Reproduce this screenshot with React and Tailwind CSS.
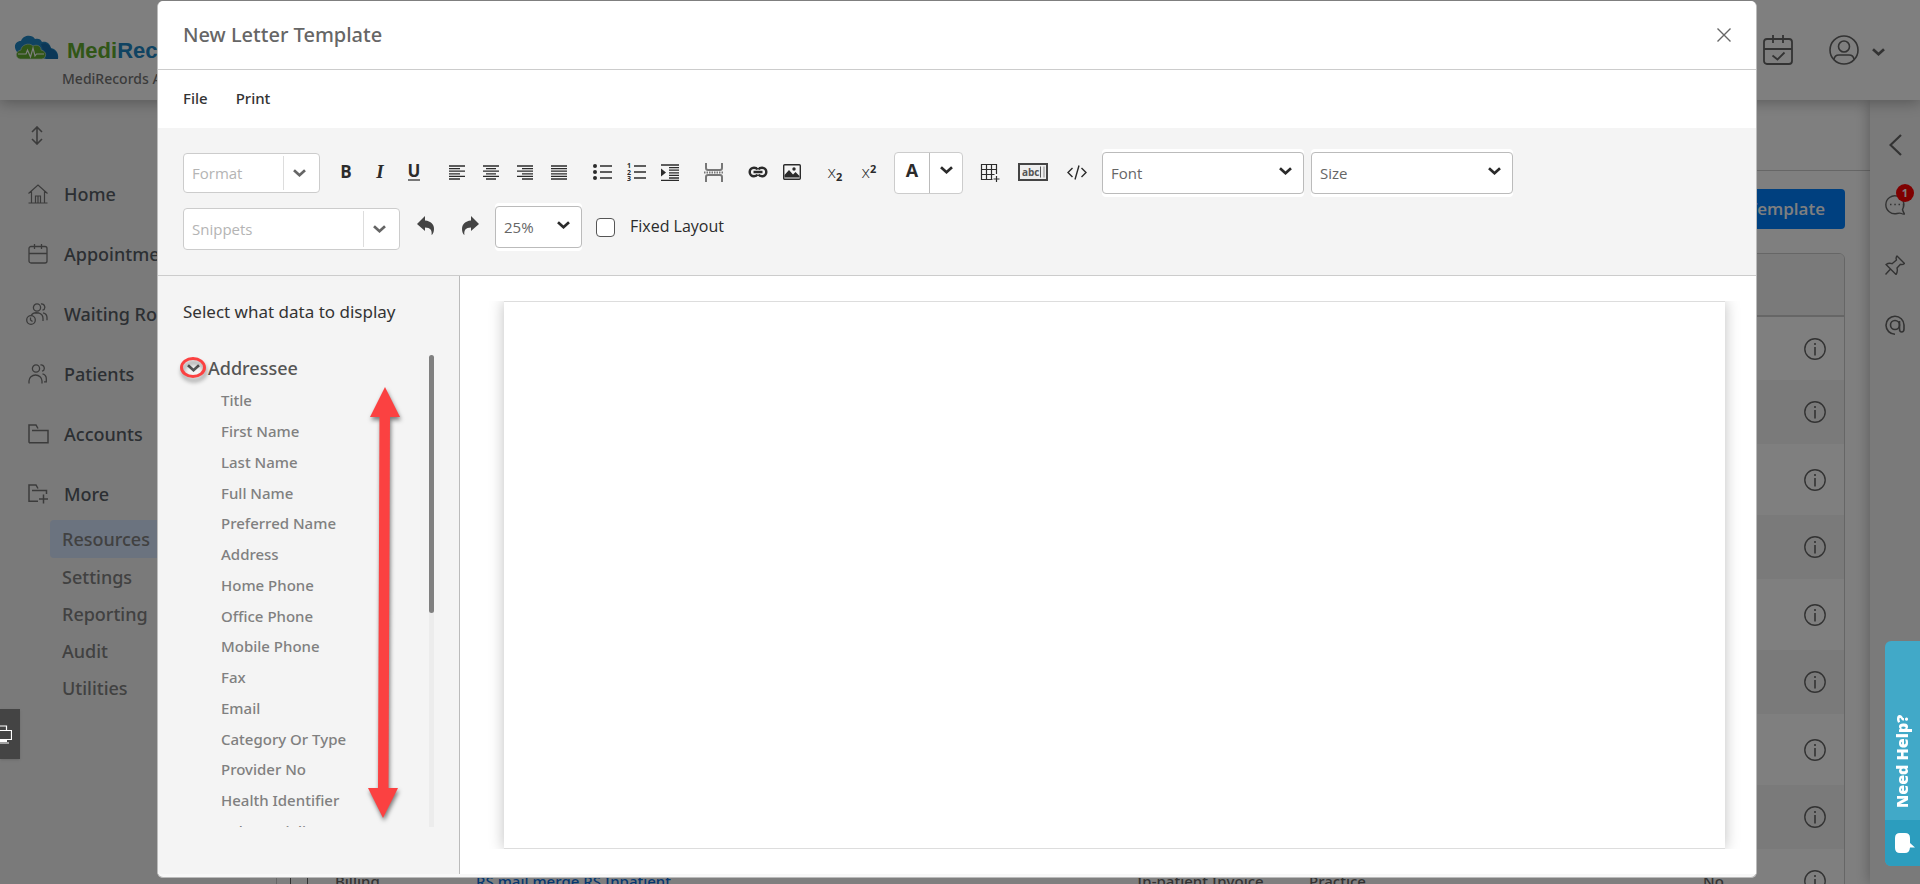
import { useState } from "react";

const navItems = [
    { label: "Home", icon: HomeIcon },
    { label: "Appointments", icon: CalendarIcon },
    { label: "Waiting Room", icon: WaitingIcon },
    { label: "Patients", icon: PatientsIcon },
    { label: "Accounts", icon: FolderIcon },
    { label: "More", icon: FolderPlusIcon },
];

const subItems = ["Settings", "Reporting", "Audit", "Utilities"];

const fields = [
    "Title",
    "First Name",
    "Last Name",
    "Full Name",
    "Preferred Name",
    "Address",
    "Home Phone",
    "Office Phone",
    "Mobile Phone",
    "Fax",
    "Email",
    "Category Or Type",
    "Provider No",
    "Health Identifier",
    "Sub Speciality",
];

const rows = [
    { tall: false },
    { tall: false },
    { tall: true },
    { tall: false },
    { tall: true },
    { tall: false },
    { tall: true },
    { tall: false },
    { tall: false, type: "Billing", name: "RS mail merge RS Inpatient", category: "In-patient Invoice", owner: "Practice", shared: "No" },
];

function HomeIcon() {
    return (
        <svg width="20" height="20" viewBox="0 0 20 20" fill="none" stroke="currentColor" strokeWidth="1.2">
            <path d="M.5 9.5 10 1l9.5 8.5M3.5 7.5v11M16.5 7.5v11M.5 19h19M7.5 19v-7h5v7M10 12v7" />
        </svg>
    );
}

function CalendarIcon() {
    return (
        <svg width="20" height="20" viewBox="0 0 20 20" fill="none" stroke="currentColor" strokeWidth="1.3">
            <rect x="1" y="2.5" width="18" height="16.5" rx="2" />
            <path d="M1 9.5h18M6.5 0v5M13.5 0v5" />
        </svg>
    );
}

function PatientsIcon() {
    return (
        <svg width="20" height="20" viewBox="0 0 20 20" fill="none" stroke="currentColor" strokeWidth="1.3">
            <circle cx="8" cy="4.5" r="3.6" />
            <path d="M1 19.5v-2.5a6.5 6 0 0 1 13 0v2.5M12.5 1a3 3.2 0 0 1 1.5 6.2M14.5 9.8a5 5 0 0 1 3.8 5v3H16" />
        </svg>
    );
}

function WaitingIcon() {
    return (
        <svg className="-ml-0.5" width="22" height="22" viewBox="0 0 22 22" fill="none" stroke="currentColor" strokeWidth="1.3">
            <circle cx="11" cy="4.5" r="3.6" />
            <path d="M5 12.5a6.5 6 0 0 1 12 3.5v2M15 1a3 3.2 0 0 1 1.5 6.2M17 9.8a5 5 0 0 1 4 5v2.5M8 10h5" />
            <circle cx="5" cy="17" r="4.3" />
            <path d="M4.5 14.5V17l2 1.5" />
        </svg>
    );
}

function FolderIcon() {
    return (
        <svg width="21" height="20" viewBox="0 0 21 20" fill="none" stroke="currentColor" strokeWidth="1.5">
            <path d="M1 18.8V1h7l2 3.5M4 6.5h16v12.3H1" />
        </svg>
    );
}

function FolderPlusIcon() {
    return (
        <svg width="21" height="20" viewBox="0 0 21 20" fill="none" stroke="currentColor" strokeWidth="1.5">
            <path d="M10 17.2H1V1h7l2 3.5M4 6.5h14.5V10M15.5 10.5v9M11 15h9" />
        </svg>
    );
}

function CloudLogo() {
    return (
        <svg width="45" height="26" viewBox="0 0 45 26">
            <path d="M3 17C-1 12 1 6 7 6 9 0 18-1 21 4c3-1 6 0 7 3 5-1 8 2 9 6 5 1 8 5 7 11H32z" fill="#2087c4" />
            <path d="M27 9c5-2 9 1 10 5 5 1 7 5 7 10H32z" fill="#176fae" />
            <path d="M6 24c-5-1-5-8 1-9 0-5 8-8 12-4 4-2 8 0 8 4 6 1 6 8 1 9z" fill="#62ac2e" stroke="#d5e6d0" strokeWidth=".6" />
            <path d="M4 19h8l1.500-4 3 7 2.500-9 2 8 1.500-2H30" fill="none" stroke="#fff" strokeWidth="1.200" />
        </svg>
    );
}

function Chevron({ className = "" }) {
    return (
        <svg className={className} width="13" height="8" viewBox="0 0 13 8" fill="none" stroke="currentColor" strokeWidth="2.7">
            <path d="m1 1.200 5.500 5 5.500-5" />
        </svg>
    );
}

function InfoIcon() {
    return (
        <svg width="22" height="22" viewBox="0 0 22 22" fill="none" stroke="currentColor" strokeWidth="1.4">
            <circle cx="11" cy="11" r="10.200" />
            <path d="M11 9v8.500M11 5v2" strokeWidth="1.6" />
        </svg>
    );
}

function Lines({ rows }) {
    return (
        <svg width="16" height="15" viewBox="0 0 16 15" stroke="currentColor" strokeWidth="1.300">
            {rows.map(([from, to], i) => (
                <path key={i} d={`M${from} ${i * 2.6 + 1}H${to}`} />
            ))}
        </svg>
    );
}

const alignments = [
    { label: "Align left", rows: [[0, 16], [0, 11], [0, 16], [0, 11], [0, 16], [0, 11]] },
    { label: "Align center", rows: [[0, 16], [3, 13], [0, 16], [3, 13], [0, 16], [3, 13]] },
    { label: "Align right", rows: [[0, 16], [5, 16], [0, 16], [5, 16], [0, 16], [5, 16]] },
    { label: "Justify", rows: [[0, 16], [0, 16], [0, 16], [0, 16], [0, 16], [0, 16]] },
];

function Tool({ label, children, className = "" }) {
    return (
        <button aria-label={label} className={`flex h-10 w-[34px] items-center justify-center pb-0.5 ${className}`}>
            {children}
        </button>
    );
}

function Combo({ label, className }) {
    return (
        <div className={`flex items-center rounded border border-[#ccc] bg-white ${className}`}>
            <input
                aria-label={label}
                placeholder={label}
                className="w-0 flex-1 pl-2 text-[15px] font-normal outline-none placeholder:text-[#b4b4b4]"
            />
            <button aria-label={`Open ${label}`} className="my-[2px] flex w-9 items-center justify-center self-stretch border-l border-[#ddd] pr-1 text-[#666]">
                <Chevron />
            </button>
        </div>
    );
}

function Select({ label, className }) {
    return (
        <div className={`relative rounded shadow-[0_3px_0_#fff,0_-3px_0_#fff] ${className}`}>
            <select aria-label={label} className="h-[42px] w-full appearance-none rounded border border-[#bbb] bg-white pl-2 text-[15px] text-[#666]">
                <option>{label}</option>
            </select>
            <Chevron className="pointer-events-none absolute top-[15px] right-3 text-[#2b2b2b]" />
        </div>
    );
}

function Toolbar() {
    const [fixedLayout, setFixedLayout] = useState(false);

    return (
        <div className="border-b border-[#ccc] bg-[#f4f4f4] pt-6 pb-[25px] pl-[25px] text-[#2b2b2b]">
            <div className="flex h-[42px] items-center">
                <Combo label="Format" className="mr-[9px] h-10 w-[137px]" />
                <Tool label="Bold"><span className="text-[17px] font-bold">B</span></Tool>
                <Tool label="Italic"><span className="font-['Liberation_Serif',serif] text-[19px] font-semibold italic">I</span></Tool>
                <Tool label="Underline"><span className="border-b-2 border-[#777] text-[17px] leading-[16px] font-bold">U</span></Tool>
                <div className="ml-[9px] flex">
                    {alignments.map((item) => (
                        <Tool key={item.label} label={item.label}>
                            <Lines rows={item.rows} />
                        </Tool>
                    ))}
                </div>
                <Tool label="Bulleted list" className="ml-[9px]">
                    <svg width="19" height="18" viewBox="0 0 19 18" stroke="currentColor" strokeWidth="1.500">
                        <path d="M7 3h12M7 9h12M7 15h12" />
                        <g fill="currentColor" stroke="none"><circle cx="2" cy="3" r="2" /><circle cx="2" cy="9" r="2" /><circle cx="2" cy="15" r="2" /></g>
                    </svg>
                </Tool>
                <Tool label="Numbered list">
                    <svg width="19" height="18" viewBox="0 0 19 18">
                        <path d="M7 3h12M7 9h12M7 15h12" stroke="currentColor" strokeWidth="1.500" />
                        <g fill="currentColor" fontSize="7" fontWeight="700"><text x="0" y="5">1</text><text x="0" y="11.500">2</text><text x="0" y="18">3</text></g>
                    </svg>
                </Tool>
                <Tool label="Indent">
                    <svg width="18" height="17" viewBox="0 0 18 17" stroke="currentColor" strokeWidth="1.300">
                        <path d="M0 1h18M8 3.600h10M8 6.200h10M8 8.800h10M8 11.400h10M8 14h10M0 16.300h18" />
                        <path d="M0 4.500 5 8.500 0 12.500z" fill="currentColor" stroke="none" />
                    </svg>
                </Tool>
                <Tool label="Page break" className="ml-2.5 text-[#777]">
                    <svg width="20" height="19" viewBox="0 0 20 19" fill="none" stroke="currentColor" strokeWidth="2">
                        <path d="M2 0v5q0 2 2 2h12q2 0 2-2V0M2 19v-5q0-2 2-2h12q2 0 2 2v5" />
                        <path d="M0 9.500h20" strokeDasharray="1.500 1" />
                    </svg>
                </Tool>
                <Tool label="Insert link" className="ml-2.5">
                    <svg width="20" height="12" viewBox="0 0 20 12" fill="none" stroke="currentColor" strokeWidth="2.500">
                        <path d="M9.500 8.500Q8.500 10.300 6 10.300A4.300 4.300 0 0 1 6 1.700q2.500 0 3.500 1.800M10.500 8.500q1 1.800 3.500 1.800a4.300 4.300 0 0 0 0-8.600q-2.500 0-3.500 1.800M5.500 6h9" />
                    </svg>
                </Tool>
                <Tool label="Insert image">
                    <svg width="18" height="16" viewBox="0 0 18 16">
                        <rect x=".7" y=".7" width="16.600" height="14.600" rx="1" fill="none" stroke="currentColor" strokeWidth="1.400" />
                        <path d="M1.500 13.500V11L6 6l4 4.500 2.500-2.500 4 4v1.500z" fill="currentColor" />
                        <circle cx="11" cy="5" r="1.700" fill="currentColor" />
                    </svg>
                </Tool>
                <Tool label="Subscript" className="ml-[9px]">
                    <span className="text-[17px] leading-5 font-light">x<sub className="text-[11px] font-bold">2</sub></span>
                </Tool>
                <Tool label="Superscript">
                    <span className="text-[17px] leading-5 font-light">x<sup className="text-[11px] font-bold">2</sup></span>
                </Tool>
                <div className="ml-2 flex h-[42px] w-[69px] rounded border border-[#ccc] bg-white">
                    <button aria-label="Text colour" className="w-[35px] border-r border-[#bbb] pb-1.5 text-[18px] font-bold">A</button>
                    <button aria-label="Choose text colour" className="flex flex-1 items-center justify-center pb-1.5">
                        <Chevron />
                    </button>
                </div>
                <Tool label="Insert table" className="ml-2.5">
                    <svg width="20" height="19" viewBox="0 0 20 19" fill="none" stroke="currentColor" strokeWidth="1.200">
                        <path d="M12.500 16.500h-11v-15h15V11M1.500 6.500h15M1.500 11.500h13M6.500 1.500v15M11.500 1.500v15M16.500 13v6M13.500 16h6" />
                    </svg>
                </Tool>
                <Tool label="Insert text field" className="ml-[9px]">
                    <svg width="30" height="18" viewBox="0 0 30 18">
                        <rect x="1" y="1" width="28" height="16" fill="#eee" stroke="#444" strokeWidth="2" />
                        <text x="4" y="13" fontSize="10" fontWeight="700" fill="#555">abc</text>
                        <path d="M22.500 3.500v11" stroke="#555" />
                        <path d="M26 3.500v11" stroke="#bbb" strokeWidth="2" />
                    </svg>
                </Tool>
                <Tool label="Source" className="ml-2.5">
                    <svg width="20" height="15" viewBox="0 0 20 15" fill="none" stroke="currentColor" strokeWidth="1.400">
                        <path d="M5.500 3 1 7.500 5.500 12M14.500 3 19 7.500 14.500 12M12 .5 8 14.500" />
                    </svg>
                </Tool>
                <Select label="Font" className="ml-2 w-[202px]" />
                <Select label="Size" className="ml-[7px] w-[202px]" />
            </div>

            <div className="mt-3 flex h-11 items-start">
                <Combo label="Snippets" className="mt-0.5 mr-2 h-[42px] w-[217px]" />
                <Tool label="Undo" className="text-[#444]">
                    <svg width="17" height="19" viewBox="0 0 17 19" fill="currentColor">
                        <path d="M0 8 8 0v4.500c6 .5 9 4 9 8.500 0 3-1 5.300-2.500 6 .8-4.500-1-7.500-6.500-7.500V15z" />
                    </svg>
                </Tool>
                <Tool label="Redo" className="ml-[11px] text-[#444]">
                    <svg width="17" height="19" viewBox="0 0 17 19" fill="currentColor">
                        <path d="M17 8 9 0v4.500C3 5 0 8.500 0 13c0 3 1 5.300 2.500 6-.8-4.500 1-7.500 6.500-7.500V15z" />
                    </svg>
                </Tool>
                <Select label="25%" className="ml-2 w-[87px]" />
                <label className="ml-3.5 flex h-10 items-center gap-[15px] text-base">
                    <input
                        type="checkbox"
                        checked={fixedLayout}
                        onChange={() => setFixedLayout(!fixedLayout)}
                        className="mt-[3px] size-[19px] appearance-none rounded border border-[#555] bg-white checked:bg-[#555]"
                    />
                    Fixed Layout
                </label>
            </div>
        </div>
    );
}

function FieldPane() {
    return (
        <aside className="relative flex w-[302px] flex-col border-r border-[#bbb] bg-[#f4f4f4] pt-6 pr-[25px] pb-[47px] pl-[25px] font-['Noto_Sans',sans-serif]">
            <h3 className="text-[17px] leading-6 font-normal text-[#333]">Select what data to display</h3>
            <div className="mt-[31px] flex min-h-0 flex-1 justify-between">
                <div className="flex-1 overflow-hidden">
                    <button className="flex h-[30px] items-center gap-2 pb-1 pl-1 text-lg leading-6 font-medium text-[#555]">
                        <Chevron />
                        Addressee
                    </button>
                    <ul className="pl-[38px]">
                        {fields.map((field) => (
                            <li key={field} className="h-[31px] text-[15px] leading-[31px] font-medium text-[#808080] nth-[4n]:h-[30px]">{field}</li>
                        ))}
                    </ul>
                </div>
                <div className="w-[5px] bg-[#ececec]">
                    <div className="h-[258px] rounded bg-[#808080]" />
                </div>
            </div>

            {/* Callouts */}
            <svg className="pointer-events-none absolute top-[78px] left-[18px] drop-shadow-[1px_4px_2px_rgba(0,0,0,0.4)]" width="34" height="28" viewBox="0 0 34 28">
                <ellipse cx="17" cy="13.500" rx="11.500" ry="9" fill="none" stroke="#fb4141" strokeWidth="3" />
            </svg>
            <svg className="pointer-events-none absolute top-[108px] left-[208px] drop-shadow-[1px_3px_2px_rgba(0,0,0,0.5)]" width="38" height="438" viewBox="0 0 38 438" fill="#fb4141">
                <path d="M19 3 34 33H24L22.500 404H32L17 434 2 404H12L13.500 33H4z" />
            </svg>
        </aside>
    );
}

function Modal() {
    return (
        <div role="dialog" aria-label="New Letter Template" className="mt-px flex h-[877px] w-full max-w-[1600px] flex-col overflow-hidden rounded-md border border-t-0 border-[#bbb] bg-[#f8f8f8] pb-[3px]">
            <div className="flex h-[69px] shrink-0 items-center justify-between border-b border-[#ccc] bg-white pr-[25px] pl-[25px]">
                <h2 className="font-['Noto_Sans',sans-serif] text-xl font-medium text-[#666]">New Letter Template</h2>
                <button aria-label="Close" className="text-[#666]">
                    <svg width="14" height="14" viewBox="0 0 14 14" stroke="currentColor" strokeWidth="1.400">
                        <path d="m.5.5 13 13M13.500.5l-13 13" />
                    </svg>
                </button>
            </div>
            <div className="flex h-[58px] shrink-0 items-center gap-7 bg-white pb-0.5 pl-[25px] font-['Noto_Sans',sans-serif] text-[15px] font-medium text-[#333]">
                <button>File</button>
                <button>Print</button>
            </div>
            <Toolbar />
            <div className="flex min-h-0 flex-1 bg-white">
                <FieldPane />
                <div className="flex-1 bg-white pt-[25px] pr-[31px] pb-[25px] pl-11">
                    <div className="h-full border-y border-[#ddd] bg-white shadow-[0_0_14px_rgba(0,0,0,0.25)] [clip-path:inset(0_-16px)]" />
                </div>
            </div>
        </div>
    );
}

export default function App() {
    return (
        <div className="relative flex h-screen flex-col overflow-hidden bg-white font-['Open_Sans','Noto_Sans',sans-serif]">
            <header className="relative z-10 flex h-[100px] shrink-0 justify-between bg-white shadow-[0_2px_14px_rgba(0,0,0,0.3)]">
                <div className="pt-[35px] pl-3.5">
                    <div className="flex h-[26px] items-end gap-2">
                        <CloudLogo />
                        <span className="font-['Liberation_Sans',sans-serif] text-[22px] leading-5 font-bold text-[#62ac2e]">
                            Medi<span className="text-[#2087c4]">Records</span>
                        </span>
                    </div>
                    <p className="mt-2 pl-12 font-['Noto_Sans',sans-serif] text-sm leading-5 font-medium text-[#777]">MediRecords Administration</p>
                </div>
                <div className="flex h-[100px] items-center pr-[35px] text-[#666]">
                    <svg width="30" height="30" viewBox="0 0 30 30" fill="none" stroke="currentColor" strokeWidth="1.800">
                        <rect x="1" y="4" width="28" height="25" rx="3" />
                        <path d="M1 14h28M10 0v8M20 0v8M9.500 20.500l5 4 7-7" />
                    </svg>
                    <svg className="ml-9" width="30" height="30" viewBox="0 0 30 30" fill="none" stroke="currentColor" strokeWidth="1.600">
                        <circle cx="15" cy="15" r="14" />
                        <circle cx="15" cy="11.500" r="5.500" />
                        <path d="M5 24.500q.5-4.500 5-4.500h10q4.500 0 5 4.500" />
                    </svg>
                    <Chevron className="mt-1 ml-[13px]" />
                </div>
            </header>

            <div className="flex min-h-0 flex-1">
                <nav className="w-[250px] shrink-0 bg-[#f4f4f4] font-['Noto_Sans',sans-serif] text-lg font-medium text-[#585f66] shadow-[0_0_14px_rgba(0,0,0,0.3)]">
                    <div className="flex h-16 items-center pt-1.5 pl-[31px] text-[#777]">
                        <svg width="12" height="19" viewBox="0 0 12 19" fill="none" stroke="currentColor" strokeWidth="1.600">
                            <path d="M6 1v17M1 6l5-5 5 5M1 13l5 5 5-5" />
                        </svg>
                    </div>
                    {navItems.map(({ label, icon: Icon }) => (
                        <a key={label} href="#" className="flex h-[60px] items-center pl-7">
                            <span className="w-9 text-[#777]"><Icon /></span>
                            {label}
                        </a>
                    ))}
                    <div className="-mt-1 ml-[50px] text-[#828282]">
                        <a href="#" className="flex h-[38px] items-center rounded bg-[#d6e6ff] pl-3">Resources</a>
                        {subItems.map((label) => (
                            <a key={label} href="#" className="flex h-[37px] items-center pl-3">{label}</a>
                        ))}
                    </div>
                </nav>

                <main className="min-w-0 flex-1 bg-white">
                    <div className="h-[71px] border-b border-[#ccc]" />
                    <div className="flex justify-end pt-[18px] pr-[25px]">
                        <button className="h-10 rounded bg-[#0080ff] px-5 text-[17px] font-semibold text-white">New Template</button>
                    </div>
                    <div className="mt-6 mr-[25px] ml-[26px] overflow-hidden rounded-md border border-[#ccc]">
                        <table className="w-full table-fixed text-left font-['Noto_Sans',sans-serif] text-[15px] font-medium text-[#666]">
                            <thead>
                                <tr className="h-[62px] border-b-2 border-[#ccc] bg-[#f4f4f4]">
                                    <th className="w-[58px]" />
                                    <th className="w-[141px]" />
                                    <th />
                                    <th className="w-[172px]" />
                                    <th className="w-[394px]" />
                                    <th className="w-[101px]" />
                                    <th className="w-[40px]" />
                                </tr>
                            </thead>
                            <tbody>
                                {rows.map((row, i) => (
                                    <tr key={i} className={`${row.tall ? "h-[71px]" : "h-16"} even:bg-[#f4f4f4]`}>
                                        <td className="pl-[13px]">
                                            <input type="checkbox" aria-label="Select template" className="block size-[18px] appearance-none border border-[#666]" />
                                        </td>
                                        <td>{row.type}</td>
                                        <td><a href="#" className="text-[#0a6fe0]">{row.name}</a></td>
                                        <td>{row.category}</td>
                                        <td>{row.owner}</td>
                                        <td>{row.shared}</td>
                                        <td><InfoIcon /></td>
                                    </tr>
                                ))}
                            </tbody>
                        </table>
                    </div>
                </main>

                <aside className="flex w-[50px] shrink-0 flex-col items-center bg-[#f4f4f4] pt-[34px] text-[#666] shadow-[0_0_14px_rgba(0,0,0,0.3)]">
                    <svg width="13" height="22" viewBox="0 0 13 22" fill="none" stroke="currentColor" strokeWidth="2.200">
                        <path d="M12 1 1.500 11 12 21" />
                    </svg>
                    <div className="relative mt-[39px]">
                        <svg width="20" height="20" viewBox="0 0 20 20" fill="none" stroke="currentColor" strokeWidth="1.400">
                            <path d="M17.500 14.500A9 9 0 1 0 12 18.500q3-.8 4.500 0 1.500.8 3 .5-1.500-2-2-4.500a9 9 0 0 0 .8-6" />
                            <path d="M5 9.500h1.500M9.300 9.500h1.500M13.500 9.500H15" />
                        </svg>
                        <span className="absolute -top-[11px] left-[11px] flex size-[18px] items-center justify-center rounded-full bg-[#ff0000] text-[11px] font-bold text-white">1</span>
                    </div>
                    <svg className="mt-10" width="20" height="20" viewBox="0 0 20 20" fill="none" stroke="currentColor" strokeWidth="1.400" strokeLinejoin="round">
                        <path d="m12 1 7.500 7.500q-2 1.500-4 .8L12 13q1 3.500-1 6.500L1 9.500q3-2 6-.8L11.500 5Q10.500 2.500 12 1zM5.500 14 .5 19.500" />
                    </svg>
                    <svg className="mt-10" width="20" height="20" viewBox="0 0 20 20" fill="none" stroke="currentColor" strokeWidth="1.600">
                        <circle cx="10" cy="10" r="4.500" />
                        <path d="M14.500 6v8q0 3 2.200 3T19 14v-4a9 9 0 1 0-9 9.200" />
                    </svg>
                </aside>
            </div>

            <div className="absolute inset-0 z-20 flex justify-center bg-black/50 pr-1.5">
                <Modal />
            </div>

            {/* Floating tabs docked on both edges */}
            <button aria-label="Screen share" className="absolute bottom-[125px] left-0 z-30 flex h-[50px] w-5 items-center bg-[#444] text-white shadow">
                <svg width="12" height="19" viewBox="0 0 12 19" fill="none" stroke="currentColor" strokeWidth="1.200">
                    <path d="M0 1h6.500v4M0 5.500h11.500v9H0M0 18h9" />
                    <path d="M0 16h7" strokeWidth="2" />
                </svg>
            </button>
            <button className="absolute right-0 bottom-[18px] z-30 flex h-[225px] w-[35px] flex-col overflow-hidden rounded-l-md bg-[#41a9c8] text-white">
                <span className="flex w-full flex-1 rotate-180 items-center pt-3 font-['Open_Sans',sans-serif] text-base leading-[34px] font-extrabold [writing-mode:vertical-rl]">
                    <span className="w-full text-left">Need Help?</span>
                </span>
                <span className="flex h-[46px] w-full items-center justify-center bg-[#2c9dbe] pl-1">
                    <svg width="20" height="22" viewBox="0 0 20 22" fill="currentColor">
                        <path d="M5 1h5q5 0 5 5v5l5 4.500h-5Q14.500 21 10 21H5q-5 0-5-5V6q0-5 5-5z" />
                    </svg>
                </span>
            </button>
        </div>
    );
}
